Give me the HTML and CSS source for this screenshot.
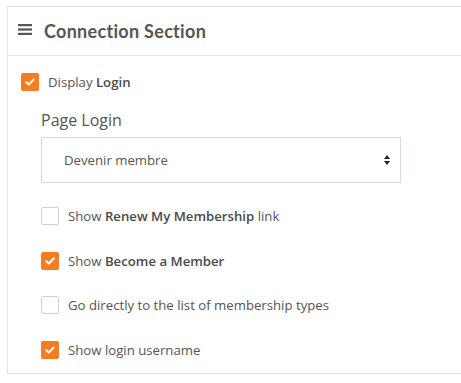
FILE: index.html
```html
<!DOCTYPE html>
<html>
<head>
<meta charset="utf-8">
<link rel="stylesheet" href="styles.css">
</head>
<body>
<div class="card">
  <div class="card-header">
    <svg class="menu-icon" width="14" height="11" viewBox="0 0 14 11"><rect x="0" y="0" width="14" height="2.2" fill="#555"/><rect x="0" y="4.4" width="14" height="2.2" fill="#555"/><rect x="0" y="8.8" width="14" height="2.2" fill="#555"/></svg>
    <h2 class="card-title">Connection Section</h2>
  </div>
  <div class="card-body">
    <label class="check-row">
      <span class="box checked"><svg width="10" height="8" viewBox="0 0 10 8"><path d="M1.3 4.2 L3.8 6.5 L8.7 1.5" fill="none" stroke="#fff" stroke-width="2" stroke-linecap="round" stroke-linejoin="round"/></svg></span>
      <span class="label-text">Display <b>Login</b></span>
    </label>
    <div class="sub">
      <div class="field-label">Page Login</div>
      <div class="select">
        <span>Devenir membre</span>
        <svg class="arrows" width="6" height="10" viewBox="0 0 6 10"><path d="M3 0 L6 4 L0 4 Z" fill="#222"/><path d="M0 6 L6 6 L3 10 Z" fill="#222"/></svg>
      </div>
      <div class="options">
        <label class="check-row">
          <span class="box"></span>
          <span class="label-text">Show <b>Renew My Membership</b> link</span>
        </label>
        <label class="check-row">
          <span class="box checked"><svg width="10" height="8" viewBox="0 0 10 8"><path d="M1.3 4.2 L3.8 6.5 L8.7 1.5" fill="none" stroke="#fff" stroke-width="2" stroke-linecap="round" stroke-linejoin="round"/></svg></span>
          <span class="label-text">Show <b>Become a Member</b></span>
        </label>
        <label class="check-row">
          <span class="box"></span>
          <span class="label-text">Go directly to the list of membership types</span>
        </label>
        <label class="check-row">
          <span class="box checked"><svg width="10" height="8" viewBox="0 0 10 8"><path d="M1.3 4.2 L3.8 6.5 L8.7 1.5" fill="none" stroke="#fff" stroke-width="2" stroke-linecap="round" stroke-linejoin="round"/></svg></span>
          <span class="label-text">Show login username</span>
        </label>
      </div>
    </div>
  </div>
</div>
</body>
</html>
```
FILE: styles.css
```css
html, body {
  margin: 0;
  padding: 0;
  background: #fff;
}
body {
  font-family: "Open Sans", "Lato", sans-serif;
  color: #555;
  padding: 6px 0 0 7px;
}
.card {
  border: 1px solid #e2e2e2;
  border-right: none;
}
.card-header {
  display: flex;
  align-items: center;
  height: 48px;
  padding-left: 10px;
  border-bottom: 1px solid #e2e2e2;
}
.menu-icon {
  display: block;
  margin-top: -3px;
}
.card-title {
  margin: 0 0 0 12px;
  font-family: "Lato", sans-serif;
  font-size: 18px;
  font-weight: 700;
  color: #555;
  letter-spacing: 0.3px;
}
.card-body {
  padding: 17px 0 14px 13px;
}
.check-row {
  display: flex;
  align-items: center;
  height: 18px;
}
.box {
  width: 18px;
  height: 18px;
  box-sizing: border-box;
  border: 1px solid #c9d1dd;
  border-radius: 2px;
  background: #fff;
  flex: none;
  display: flex;
  align-items: center;
  justify-content: center;
}
.box.checked {
  background: #f57c20;
  border-color: #f57c20;
}
.label-text {
  margin-left: 9px;
  font-size: 13.2px;
  color: #555;
}
.label-text b {
  font-weight: 600;
  color: #4a4a4a;
}
.sub {
  padding-left: 20px;
  margin-top: 19px;
}
.field-label {
  font-size: 16px;
  font-weight: 500;
  color: #555;
  line-height: 20px;
}
.select {
  margin-top: 7px;
  width: 360px;
  height: 46px;
  box-sizing: border-box;
  border: 1px solid #d3dae4;
  display: flex;
  align-items: center;
  justify-content: space-between;
  padding: 0 10px 0 22px;
  font-size: 13.2px;
  color: #555;
}
.options {
  margin-top: 24px;
  display: flex;
  flex-direction: column;
  gap: 26.5px;
}
```
